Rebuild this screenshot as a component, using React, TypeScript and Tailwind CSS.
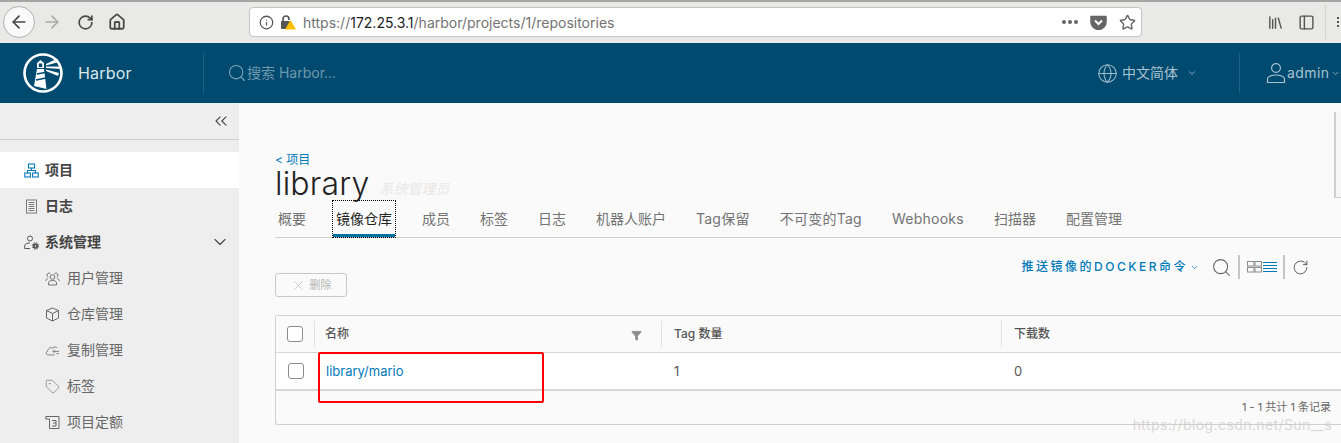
import React from 'react'
import { ChevronDown, ChevronsLeft, ArrowLeft, ArrowRight, RotateCw, Home, Info, Star, Search, Globe, Tag, X, Filter, Library, PanelLeft } from 'lucide-react'

const FONT = '"Inter", "Noto Sans CJK SC", sans-serif'

function HarborLogo() {
    return (
        <svg width="40" height="40" viewBox="0 0 40 40">
            <circle cx="20" cy="20" r="18.5" fill="none" stroke="#fff" strokeWidth="2.6" />
            <path d="M11 33 L14 16 H21 L23.5 36 Z" fill="#fff" />
            <path d="M14 15 V10 L17.5 7 L21 10 V15 Z" fill="#fff" />
            <rect x="15.8" y="10.5" width="3.4" height="3.6" fill="#004a70" />
            <path d="M14 21 L22 19.5 M13 27 L23 25" stroke="#004a70" strokeWidth="1.6" />
            <path d="M23 11 L34 5.5 L36 9 L23 12.5 Z M23 13.5 L37.5 13.5 L37.5 16 L23 15 Z M23 16.5 L36 20 L35 23 L23 18 Z" fill="#fff" />
        </svg>
    )
}

function ProjectIcon() {
    return (
        <svg width="15" height="15" viewBox="0 0 15 15" fill="none" stroke="#0079b8" strokeWidth="1.1">
            <rect x="4.500" y="1" width="6" height="4" />
            <rect x="0.800" y="10" width="5.600" height="4" />
            <rect x="8.600" y="10" width="5.600" height="4" />
            <path d="M7.500 5 V7.500 M3.500 10 V7.500 H11.500 V10" />
        </svg>
    )
}

function LogIcon() {
    return (
        <svg width="15" height="15" viewBox="0 0 15 15" fill="none" stroke="#777" strokeWidth="1">
            <rect x="2.500" y="1" width="10" height="13" fill="#f4f4f4" />
            <path d="M4.500 3.500 H10.500 M4.500 5.500 H10.500 M4.500 7.500 H10.500 M4.500 9.500 H10.500 M4.500 11.500 H10.500" />
        </svg>
    )
}

function AdminIcon() {
    return (
        <svg width="15" height="15" viewBox="0 0 15 15" fill="none" stroke="#555" strokeWidth="1">
            <circle cx="6" cy="3.500" r="2.500" />
            <path d="M6 8 C3 8 0.700 9 0.700 11 V13.500 H6" />
            <circle cx="11.500" cy="11" r="1.800" strokeWidth="2" />
            <circle cx="11.500" cy="11" r="3.300" strokeWidth="1" strokeDasharray="1.300 1.300" />
        </svg>
    )
}

function UsersIcon() {
    return (
        <svg width="15" height="15" viewBox="0 0 15 15" fill="none" stroke="#666" strokeWidth="0.9">
            <circle cx="7.500" cy="6" r="2.300" />
            <path d="M3.500 14 V12 C3.500 10.200 5.500 9.500 7.500 9.500 C9.500 9.500 11.500 10.200 11.500 12 V14 Z" />
            <path d="M5.500 2.800 A2 2 0 1 0 3.300 6 M9.500 2.800 A2 2 0 1 1 11.700 6 M2.800 7.500 C1.500 8 0.700 8.800 0.700 10 M12.200 7.500 C13.500 8 14.300 8.800 14.300 10" />
        </svg>
    )
}

function BoxIcon() {
    return (
        <svg width="15" height="15" viewBox="0 0 15 15" fill="none" stroke="#666" strokeWidth="1">
            <path d="M7.500 1 L13.500 3.500 V11 L7.500 14 L1.500 11 V3.500 Z" strokeLinejoin="round" />
            <path d="M1.500 3.500 L7.500 6.500 L13.500 3.500 M7.500 6.500 V14" />
        </svg>
    )
}

function CloudIcon() {
    return (
        <svg width="17" height="15" viewBox="0 0 17 15" fill="none" stroke="#666" strokeWidth="0.9">
            <path d="M11 12.500 H3.500 C1 12.500 0.500 9 3 8.500 C3 5 6.500 3 9 5 C10 3 12.500 3 13.500 4.500" />
            <path d="M16 8.500 H9 M11 6.500 L9 8.500 L11 10.500 M13 11 H15.500" />
        </svg>
    )
}

function QuotaIcon() {
    return (
        <svg width="15" height="15" viewBox="0 0 15 15" fill="none" stroke="#666" strokeWidth="1">
            <path d="M0.800 1.500 H14 V13.500 H4.500 V4 H0.800 Z" />
            <path d="M7 5.500 H11 L11 11 H7 M8 8 H11" />
        </svg>
    )
}

function UserIcon() {
    return (
        <svg width="20" height="22" viewBox="0 0 20 22" fill="none" stroke="#a9c3d0" strokeWidth="1.200">
            <circle cx="10" cy="6" r="4.400" />
            <path d="M1.500 20.500 V17 C1.500 14.500 6 13 10 13 C14 13 18.500 14.500 18.500 17 V20.500 Z" strokeLinejoin="round" />
        </svg>
    )
}

function BrowserBar() {
    return (
        <div className="h-[43px] bg-[#e9e9e8] border-t-2 border-[#a5a5a5] pb-[1px] flex items-center shrink-0">
            <div className="ml-[3px] w-[32px] h-[32px] rounded-full border border-[#b1b1b1] bg-[#f9f9f9] flex items-center justify-center">
                <ArrowLeft size={20} strokeWidth={2} className="text-[#444]" />
            </div>
            <ArrowRight size={20} strokeWidth={2} className="ml-[7px] text-[#ababab]" />
            <RotateCw size={17} strokeWidth={2.400} className="ml-[15px] text-[#4a4a4a]" />
            <Home size={18} strokeWidth={2.400} className="ml-[14px] text-[#4a4a4a]" />
            <div className="ml-[123px] w-[893px] h-[30px] bg-white border border-[#c4c4c4] rounded-[4px] flex items-center pl-[9px] pr-[5px]">
                <Info size={15} className="text-[#555]" />
                <div className="relative ml-[6px] w-[16px] h-[16px]">
                    <svg width="16" height="16" viewBox="0 0 16 16">
                        <path d="M3 8V5a3 3 0 0 1 6 0v1" fill="none" stroke="#555" strokeWidth="1.700" />
                        <rect x="1" y="7" width="9" height="8" rx="1" fill="#555" />
                        <path d="M10.500 6 L16 15.500 H5 Z" fill="#ffbf00" />
                    </svg>
                </div>
                <span className="ml-[7px] text-[14px] text-[#737373]">https://<span className="text-[#222]">172.25.3.1</span>/harbor/projects/1/repositories</span>
                <div className="ml-auto flex gap-[2px]">
                    <i className="block w-[4px] h-[4px] rounded-full bg-[#666]" />
                    <i className="block w-[4px] h-[4px] rounded-full bg-[#666]" />
                    <i className="block w-[4px] h-[4px] rounded-full bg-[#666]" />
                </div>
                <svg className="ml-[12px]" width="17" height="15" viewBox="0 0 17 15">
                    <path d="M1 1.500 H16 V7 A7.500 7.500 0 0 1 1 7 Z" fill="#666" stroke="#666" strokeLinejoin="round" strokeWidth="1.500" />
                    <path d="M5 5.500 L8.500 9 L12 5.500" fill="none" stroke="#fff" strokeWidth="2" />
                </svg>
                <Star size={17} strokeWidth={2} className="ml-[12px] text-[#666]" />
            </div>
            <Library size={17} strokeWidth={2} className="ml-[125px] text-[#555]" />
            <PanelLeft size={17} strokeWidth={2} className="ml-[14px] text-[#555]" />
            <div className="ml-[10px] w-px h-[34px] bg-[#d3d3d3]" />
            <div className="ml-[11px] flex flex-col gap-[2px]">
                <i className="block w-[2px] h-[2px] bg-[#555]" />
                <i className="block w-[2px] h-[2px] bg-[#555]" />
                <i className="block w-[2px] h-[2px] bg-[#555]" />
            </div>
        </div>
    )
}

function Header() {
    return (
        <header className="h-[60px] bg-[#004a70] flex items-center shrink-0">
            <div className="ml-[23px]"><HarborLogo /></div>
            <span className="ml-[15px] text-[16px] tracking-[0.200px] text-[#dbe6ec] w-[54px]">Harbor</span>
            <div className="ml-[71px] w-px h-[40px] bg-[#1f6183]" />
            <Search size={20} strokeWidth={1.300} className="ml-[23px] text-[#7fa4b7]" />
            <span className="-mt-[2px] text-[14px] text-[#6f98ad] w-[89px] whitespace-nowrap">搜索 Harbor...</span>
            <Globe size={21} strokeWidth={1.200} className="ml-[761px] text-[#9dbccb]" />
            <span className="ml-[4px] -mt-[2px] text-[14px] text-[#a9c3d0]">中文简体</span>
            <ChevronDown size={10} className="ml-[9px] text-[#a9c3d0]" />
            <div className="ml-[42px] w-px h-[40px] bg-[#1f6183]" />
            <div className="ml-[26px]"><UserIcon /></div>
            <span className="ml-[1px] -mt-[2px] text-[14px] tracking-[0.400px] text-[#a9c3d0]">admin</span>
            <ChevronDown size={9} className="ml-[2px] text-[#a9c3d0]" />
        </header>
    )
}

function SideItem({ icon, label, active, bold, sub, trailing }: { icon: React.ReactNode; label: string; active?: boolean; bold?: boolean; sub?: boolean; trailing?: React.ReactNode }) {
    return (
        <div className={`h-[36px] flex items-center ${active ? 'bg-white' : ''} ${sub ? 'pl-[45px]' : 'pl-[24px]'}`}>
            <div className="w-[15px] h-[15px] flex items-center justify-center shrink-0">{icon}</div>
            <span className={`${sub ? 'ml-[7px]' : 'ml-[6px]'} -mt-[2px] text-[14px] ${bold ? 'font-bold text-[#444]' : 'text-[#666]'}`}>{label}</span>
            {trailing}
        </div>
    )
}

function Sidebar() {
    return (
        <aside className="w-[239px] bg-[#eeeeee] shrink-0 flex flex-col">
            <div className="h-[37px] border-b border-[#d0d0d0] flex items-center justify-end pr-[8px] shrink-0">
                <ChevronsLeft size={20} strokeWidth={1.300} className="text-[#444]" />
            </div>
            <div className="mt-[12px]">
                <SideItem active bold label="项目" icon={<ProjectIcon />} />
                <SideItem bold label="日志" icon={<LogIcon />} />
                <SideItem bold label="系统管理" icon={<AdminIcon />} trailing={<ChevronDown size={20} strokeWidth={1.300} className="ml-auto mr-[9px] text-[#444]" />} />
                <SideItem sub label="用户管理" icon={<UsersIcon />} />
                <SideItem sub label="仓库管理" icon={<BoxIcon />} />
                <SideItem sub label="复制管理" icon={<CloudIcon />} />
                <SideItem sub label="标签" icon={<Tag size={15} strokeWidth={1} className="text-[#666]" />} />
                <SideItem sub label="项目定额" icon={<QuotaIcon />} />
            </div>
        </aside>
    )
}

const TABS = [
    { label: '概要' },
    { label: '镜像仓库', active: true },
    { label: '成员' },
    { label: '标签' },
    { label: '日志' },
    { label: '机器人账户' },
    { label: 'Tag保留', latin: true },
    { label: '不可变的Tag', latin: true },
    { label: 'Webhooks', latin: true },
    { label: '扫描器' },
    { label: '配置管理' },
]

function Tabs() {
    return (
        <div className="h-[37px] flex items-stretch gap-[30px] pl-[3px] border-b border-[#cfcfcf] text-[14px] text-[#737373]">
            {TABS.map((t) => (
                <div key={t.label} className={t.active ? 'relative -mx-[3px] px-[3px] flex items-center text-[#222] outline-1 outline-dotted outline-black border-b-[3px] border-[#0072a3] pt-[1px]' : t.latin ? 'flex items-center pb-[2px] tracking-[0.250px]' : 'flex items-center pb-[2px]'}>
                    {t.label}
                </div>
            ))}
        </div>
    )
}

function Checkbox() {
    return <div className="w-[16px] h-[16px] rounded-[3px] border border-[#8c8c8c] bg-white" />
}

function RepoTable() {
    return (
        <div className="mt-[18px] border border-[#cfcfcf] border-r-0 rounded-l-[3px] h-[110px] text-[12px]">
            <div className="h-[37px] flex items-center border-b border-[#d7d7d7] text-[#555] bg-[#fafafa]">
                <div className="w-[39px] h-[26px] flex items-center justify-center border-r border-[#e2e2e2] shrink-0"><Checkbox /></div>
                <div className="w-[347px] h-[26px] flex items-center border-r border-[#e2e2e2] pl-[10px] font-medium shrink-0">
                    <span className="-mt-[1px]">名称</span>
                    <Filter size={11} className="ml-auto mr-[19px] mt-[3px] text-[#8c8c8c] fill-[#8c8c8c]" />
                </div>
                <div className="w-[340px] h-[26px] flex items-center border-r border-[#e2e2e2] pl-[12px] font-medium shrink-0"><span className="-mt-[1px]">Tag 数量</span></div>
                <div className="pl-[12px] font-medium"><span className="-mt-[1px] block">下载数</span></div>
            </div>
            <div className="h-[38px] pt-[1px] flex items-center bg-white border-b-2 border-[#d7d7d7] text-[13px] text-[#565656]">
                <div className="w-[39px] -mt-[1px] flex items-center justify-center shrink-0"><Checkbox /></div>
                <div className="w-[347px] pl-[11px] text-[#0079b8] shrink-0">library/mario</div>
                <div className="w-[340px] pl-[12px] shrink-0">1</div>
                <div className="pl-[12px]">0</div>
            </div>
            <div className="h-[33px] flex items-center justify-end pr-[10px] text-[11px] text-[#666]">1 - 1 共计 1 条记录</div>
        </div>
    )
}

function Main() {
    return (
        <main className="relative flex-1 bg-[#fafafa] pl-[36px] overflow-hidden">
            <div className="pt-[50px] text-[12px] leading-[13px] text-[#0079b8]">&lt; 项目</div>
            <div className="flex items-end h-[35px]">
                <span className="text-[32px] leading-[35px] font-light tracking-[0.200px] text-[#222]">library</span>
                <span className="ml-[10px] mb-[2px] text-[14px] leading-[20px] italic text-[#e8e8e8]">系统管理员</span>
            </div>
            <Tabs />
            <div className="mt-[17px] flex items-center justify-end h-[24px] pr-[32px]">
                <span className="text-[12px] font-medium tracking-[2.500px] text-[#0079b8]">推送镜像的DOCKER命令</span>
                <ChevronDown size={9} className="ml-[2px] text-[#0079b8]" />
                <Search size={21} strokeWidth={1.200} className="ml-[12px] text-[#666]" />
                <div className="ml-[6px] w-[2px] h-[24px] bg-[#c4c4c4]" />
                <svg className="ml-[7px]" width="15" height="12" viewBox="0 0 15 12" fill="none" stroke="#8c8c8c">
                    <rect x="0.500" y="0.500" width="6.500" height="4.500" />
                    <rect x="8" y="0.500" width="6.500" height="4.500" />
                    <rect x="0.500" y="6.500" width="6.500" height="4.500" />
                    <rect x="8" y="6.500" width="6.500" height="4.500" />
                </svg>
                <svg className="ml-[1px]" width="14" height="11" viewBox="0 0 14 11" stroke="#0079b8">
                    <path d="M0 0.500 H14 M0 3.500 H14 M0 6.500 H14 M0 9.500 H14" />
                </svg>
                <div className="ml-[6px] w-[2px] h-[24px] bg-[#c4c4c4]" />
                <RotateCw size={17} strokeWidth={1.300} className="ml-[7px] text-[#555]" />
            </div>
            <div className="w-[72px] h-[24px] -mt-[6px] border border-[#c8c8c8] rounded-[3px] flex items-center justify-center text-[11px] text-[#b5b5b5]">
                <X size={15} strokeWidth={1} /><span className="ml-[4px]">删除</span>
            </div>
            <RepoTable />
            {/* scrollbar thumb, right edge */}
            <div className="absolute right-0 top-[9px] w-[7px] h-[86px] bg-[#f6f6f6] border-l-2 border-b border-[#cfcfcf]" />
            {/* annotation box drawn over the screenshot */}
            <div className="absolute left-[79px] top-[249px] w-[226px] h-[51px] border-2 border-[#ff0000] rounded-[2px]" />
            <div className="absolute right-[9px] top-[313px] text-[14px] leading-[18px] text-[#c8c8c8]/70 tracking-[0.400px]">https://blog.csdn.net/Sun__s</div>
        </main>
    )
}

export default function App() {
    return (
        <div className="w-[1341px] h-[443px] overflow-hidden flex flex-col" style={{ fontFamily: FONT }}>
            <BrowserBar />
            <Header />
            <div className="flex flex-1 min-h-0">
                <Sidebar />
                <Main />
            </div>
        </div>
    )
}
